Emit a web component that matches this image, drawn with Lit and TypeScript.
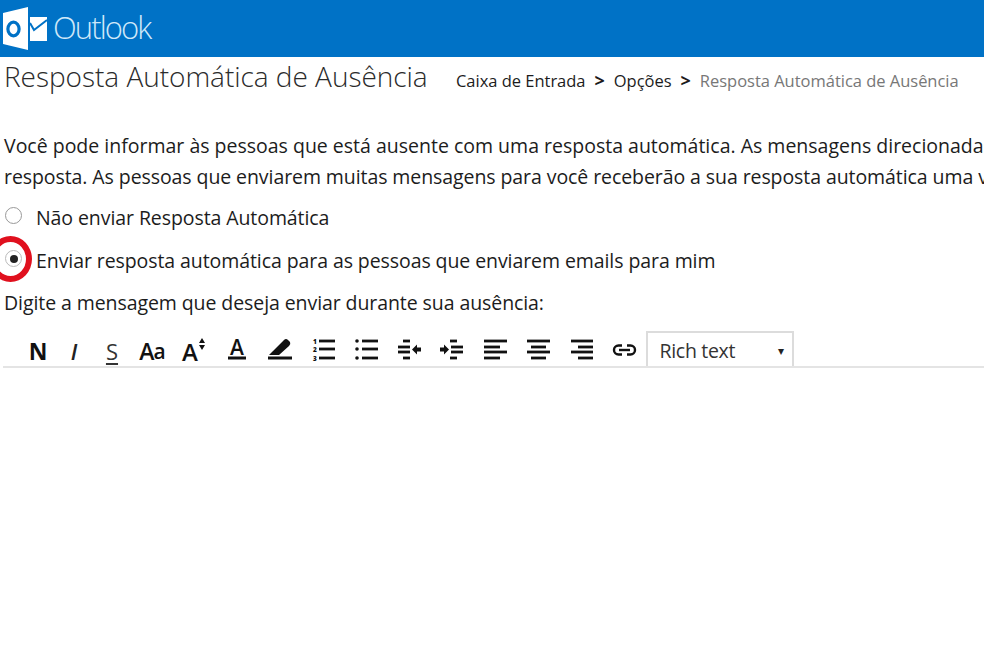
import { LitElement, html, css, svg } from "lit";
import { customElement } from "lit/decorators.js";

const ico = (body: unknown) => html`<svg class="ico" viewBox="0 0 30 30" width="30" height="30">${body}</svg>`;
const bars = (rows: [number, number, number][]) =>
  rows.map(([x, y, w]) => svg`<rect x=${x} y=${y - 1.4} width=${w} height="2.8" fill="#111"></rect>`);

@customElement("app-root")
export class AppRoot extends LitElement {
  static styles = css`
    :host { display: block; width: 984px; height: 646px; overflow: hidden; background: #fff; position: relative;
      font-family: "Open Sans", "Noto Sans", sans-serif; color: #1c1c1c; }
    .top { height: 57px; background: #0072c6; display: flex; align-items: center; padding-left: 3px; gap: 5px; }
    .logo { display: block; margin-top: 3px; }
    .brand { font-size: 31px; font-weight: 300; color: #cfe8f9; letter-spacing: -1.9px; line-height: 57px; margin-top: -3px; }
    .head { display: flex; align-items: baseline; height: 43px; margin-top: -2px; padding-left: 4px; }
    h1 { margin: 0; font-size: 28px; font-weight: 300; color: #2b2b2b; line-height: 43px; white-space: nowrap; width: 452px; flex: none; letter-spacing: -0.03px; }
    .crumbs { display: flex; align-items: baseline; font-size: 16.5px; white-space: nowrap; letter-spacing: -0.02px; }
    .sep { font-size: 18px; margin: 0 9px; font-weight: 700; }
    .cur { color: #777; }
    .body { padding-left: 4px; font-size: 19.5px; white-space: nowrap; overflow: hidden; letter-spacing: -0.08px; }
    .intro { margin: 0; padding-top: 32px; line-height: 31px; height: 62px; letter-spacing: 0; }
    .tight { letter-spacing: -0.08px; }
    .opt { display: flex; align-items: center; height: 43px; gap: 12px; margin-left: 1px; }
    .opt.first { margin-top: 4px; }
    .radio { width: 17px; height: 17px; box-sizing: border-box; border: 1.5px solid #999; border-radius: 50%; display: flex; align-items: center; justify-content: center; flex: none; margin-top: -4px; }
    .radio.on { border-color: #bbb; }
    .radio.on::after { content: ""; width: 8px; height: 8px; border-radius: 50%; background: #222; }
    .opt .t { margin-left: 2px; }
    .prompt { line-height: 42px; height: 42px; }
    .ring { position: absolute; left: -11px; top: 236px; width: 43px; height: 46px; box-sizing: border-box; border: 6.5px solid #e0101e; border-radius: 50%; }
    .bar { display: grid; grid-template-columns: 35px 37px 39px 41px repeat(11, 43px) 148px; height: 34px; margin: 8px 0 0 3px; padding-left: 17.5px; border-bottom: 2px solid #e4e4e4; align-items: start; }
    .cell { box-sizing: border-box; display: flex; align-items: center; justify-content: center; color: #111; line-height: 1; height: 34px; padding-top: 4px; }
    .n { font-weight: 700; font-size: 23px; }
    .i { font-style: italic; font-size: 22px; color: #222; font-weight: 600; }
    .s { font-size: 22px; text-decoration: underline; text-underline-offset: 3px; color: #333; }
    .aa { font-size: 23px; font-weight: 600; letter-spacing: -1px; }
    .aa small { font-size: 21px; }
    .ico { display: block; flex: none; }
    .sel { box-sizing: border-box; height: 35px; margin-top: -1px; border: 2px solid #dcdcdc; border-bottom: 0; display: flex; justify-content: space-between; align-items: center; padding: 1px 8px 0 12px; font-size: 19.5px; color: #333; letter-spacing: -0.3px; }
    .caret { font-size: 12px; color: #222; }
  `;

  render() {
    return html`
      <div class="top">
        <svg class="logo" width="45" height="46" viewBox="0 0 45 46">
          <path d="M0 6 L25 0 V43 L0 37Z" fill="#fff"></path>
          <ellipse cx="10.5" cy="22" rx="5.6" ry="6.8" fill="none" stroke="#0072c6" stroke-width="3.2"></ellipse>
          <path d="M27 10 H44 V34 H27Z" fill="#fff"></path>
          <path d="M27 16 L31 23 L44 13" fill="none" stroke="#0072c6" stroke-width="2"></path>
        </svg>
        <span class="brand">Outlook</span>
      </div>
      <div class="head">
        <h1>Resposta Automática de Ausência</h1>
        <div class="crumbs">
          <span>Caixa de Entrada</span><span class="sep">&gt;</span><span>Opções</span><span class="sep">&gt;</span><span class="cur">Resposta Automática de Ausência</span>
        </div>
      </div>
      <div class="body">
        <p class="intro">Você pode informar às pessoas que está ausente com uma resposta automática. As mensagens direcionadas a você durante esse período receberão<br /><span class="tight">resposta. As pessoas que enviarem muitas mensagens para você receberão a sua resposta automática uma vez apenas.</span></p>
        <div class="opt first"><span class="radio"></span><span class="t">Não enviar Resposta Automática</span></div>
        <div class="opt"><span class="radio on"></span><span class="t">Enviar resposta automática para as pessoas que enviarem emails para mim</span></div>
        <div class="prompt">Digite a mensagem que deseja enviar durante sua ausência:</div>
      </div>
      <div class="bar">
        <span class="cell n">N</span>
        <span class="cell i">I</span>
        <span class="cell s">S</span>
        <span class="cell aa">A<small>a</small></span>
        <span class="cell">${ico(svg`<text x="3" y="25" font-size="24" font-weight="600" fill="#111">A</text><path d="M20 7 L23 2 L26 7Z M20 9 L23 14 L26 9Z" fill="#111"></path>`)}</span>
        <span class="cell">${ico(svg`<text x="8" y="19" font-size="21" font-weight="600" fill="#111">A</text><rect x="6" y="20.5" width="18" height="3" fill="#111"></rect>`)}</span>
        <span class="cell">${ico(svg`<path d="M8 15 L19 4 Q21 2 23 4 L25 6 Q26 8 24 10 L14 19 H8Z M4 19 L8 15 L10 19Z" fill="#111"></path><rect x="3" y="20.5" width="24" height="3" fill="#111"></rect>`)}</span>
        <span class="cell">${ico(svg`${bars([[11,5,16],[11,13,16],[11,22,16]])}<text x="5" y="7.5" font-size="6.5" font-weight="800" fill="#111">1</text><text x="5" y="16" font-size="6.5" font-weight="800" fill="#111">2</text><text x="5" y="25" font-size="6.5" font-weight="800" fill="#111">3</text>`)}</span>
        <span class="cell">${ico(svg`${bars([[11,5,16],[11,13,16],[11,22,16]])}<circle cx="6" cy="5" r="1.8" fill="#111"></circle><circle cx="6" cy="13" r="1.8" fill="#111"></circle><circle cx="6" cy="22" r="1.8" fill="#111"></circle>`)}</span>
        <span class="cell">${ico(svg`${bars([[9,5,7],[4,11,12],[4,16,12],[9,22,7]])}<path d="M18 13.5 L23 8.5 V11.5 H27 V15.5 H23 V18.5Z" fill="#111"></path>`)}</span>
        <span class="cell">${ico(svg`${bars([[13,5,7],[14,11,12],[14,16,12],[13,22,7]])}<path d="M12 13.5 L7 8.5 V11.5 H3 V15.5 H7 V18.5Z" fill="#111"></path>`)}</span>
        <span class="cell">${ico(svg`${bars([[4,5,23],[4,11,16],[4,16,23],[4,22,16]])}`)}</span>
        <span class="cell">${ico(svg`${bars([[4,5,23],[8,11,15],[4,16,23],[8,22,15]])}`)}</span>
        <span class="cell">${ico(svg`${bars([[5,5,22],[12,11,15],[5,16,22],[12,22,15]])}`)}</span>
        <span class="cell">${ico(svg`<path d="M13 9.5 H9.5 A4.5 4.5 0 0 0 9.5 18.5 H13 M18 9.5 H21.5 A4.5 4.5 0 0 1 21.5 18.5 H18" fill="none" stroke="#111" stroke-width="2.4"></path><rect x="10" y="12.8" width="11" height="2.4" fill="#111"></rect>`)}</span>
        <div class="sel"><span>Rich text</span><span class="caret">▾</span></div>
      </div>
      <div class="ring"></div>
    `;
  }
}
